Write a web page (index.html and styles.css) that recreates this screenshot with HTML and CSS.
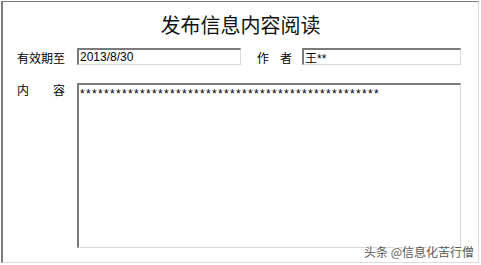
FILE: index.html
```html
<!DOCTYPE html>
<html lang="zh">
<head>
<meta charset="utf-8">
<link rel="stylesheet" href="styles.css">
</head>
<body>
<div class="frame">
  <h1 class="title">发布信息内容阅读</h1>
  <div class="row row-top">
    <div class="label label-wide">有效期至</div>
    <div class="field field-date">2013/8/30</div>
    <div class="label label-author"><span>作</span><span>者</span></div>
    <div class="field field-author"><span class="cjk">王</span>**</div>
  </div>
  <div class="row row-content">
    <div class="label label-wide label-content"><span>内</span><span>容</span></div>
    <div class="field area"><span class="stars">**************************************************</span></div>
  </div>
  <div class="watermark">头条 @信息化苦行僧</div>
</div>
</body>
</html>
```

FILE: styles.css
```css
html, body {
  margin: 0;
  padding: 0;
  background: #ffffff;
}
body {
  width: 481px;
  height: 265px;
  overflow: hidden;
  font-family: "Noto Sans CJK SC", "Liberation Sans", sans-serif;
  color: #000;
}
.frame {
  position: relative;
  box-sizing: border-box;
  margin: 1px 0 0 1px;
  width: 478px;
  height: 262px;
  border-top: 1px solid #7c7c7c;
  border-left: 2px solid #7c7c7c;
  border-right: 1px solid #dcdcdc;
  border-bottom: 1px solid #dcdcdc;
  padding: 13px 0 0 14px;
  display: flex;
  flex-direction: column;
}
.title {
  margin: 0 0 0 -14px;
  font-size: 20px;
  line-height: 20px;
  height: 20px;
  font-weight: normal;
  text-align: center;
  color: #111;
}
.row {
  display: flex;
  align-items: flex-start;
}
.row-top {
  margin-top: 13px;
  height: 17px;
}
.row-content {
  margin-top: 18px;
}
.label {
  font-size: 12px;
  line-height: 12px;
  padding-top: 4px;
  color: #000;
  display: flex;
  justify-content: space-between;
  white-space: nowrap;
  flex: none;
}
.label-wide {
  width: 48px;
  margin-right: 12px;
}
.label-author {
  width: 35px;
  margin-left: 16px;
  margin-right: 10px;
}
.label-content {
  padding-top: 1px;
}
.field {
  box-sizing: border-box;
  flex: none;
  background: #fff;
  border-top: 2px solid #7a7a7a;
  border-left: 2px solid #7a7a7a;
  border-right: 1px solid #d8d8d8;
  border-bottom: 1px solid #d8d8d8;
  font-family: "Liberation Sans", sans-serif;
  font-size: 12px;
  line-height: 13px;
  padding: 1px 0 0 1px;
  white-space: nowrap;
  overflow: hidden;
}
.field-date {
  width: 164px;
  height: 17px;
}
.field-author {
  width: 159px;
  height: 17px;
}
.cjk {
  font-family: "Noto Sans CJK SC", sans-serif;
}
.area {
  width: 384px;
  height: 165px;
  padding-top: 3px;
}
.stars {
  letter-spacing: 1.33px;
}
.watermark {
  position: absolute;
  right: 4px;
  bottom: 4px;
  font-size: 12px;
  line-height: 12px;
  color: #5a5a5a;
  text-shadow: 1px 1px 0 #ffffff, -1px -1px 0 #ffffff;
}
```
